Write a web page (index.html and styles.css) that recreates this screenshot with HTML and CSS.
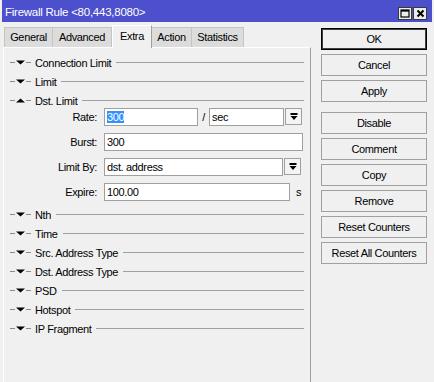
FILE: index.html
```html
<!DOCTYPE html>
<html lang="en">
<head>
  <meta charset="UTF-8">
  <title>Firewall Rule</title>
  <link rel="stylesheet" href="styles.css">
</head>
<body>
  <div class="window">
    <!-- Title bar -->
    <div class="titlebar">
      <span class="title">Firewall Rule &lt;80,443,8080&gt;</span>
      <div class="win-buttons">
        <span class="win-btn">
          <svg width="10" height="9" viewBox="0 0 10 9"><rect x="1" y="1" width="8" height="7" fill="none" stroke="#000" stroke-width="1.2"/><rect x="1" y="1" width="8" height="1.6" fill="#000"/></svg>
        </span>
        <span class="win-btn">
          <svg width="9" height="9" viewBox="0 0 9 9"><path d="M1.5 1.5 L7.5 7.5 M7.5 1.5 L1.5 7.5" stroke="#000" stroke-width="2"/></svg>
        </span>
      </div>
    </div>

    <div class="content">
      <div class="main">
        <!-- Tabs -->
        <div class="tabs">
          <div class="tab tab-general">General</div>
          <div class="tab tab-advanced">Advanced</div>
          <div class="tab tab-extra active">Extra</div>
          <div class="tab tab-action">Action</div>
          <div class="tab tab-statistics">Statistics</div>
        </div>

        <div class="panel">
          <div class="section">
            <svg class="toggle" width="21" height="9" viewBox="0 0 21 9"><path d="M0 4.5 H5 M16 4.5 H21" stroke="#8a8a8a"/><polygon points="6,2.5 15,2.5 10.5,6.5" fill="#000"/></svg>
            <span class="section-title">Connection Limit</span><span class="section-line"></span>
          </div>
          <div class="section">
            <svg class="toggle" width="21" height="9" viewBox="0 0 21 9"><path d="M0 4.5 H5 M16 4.5 H21" stroke="#8a8a8a"/><polygon points="6,2.5 15,2.5 10.5,6.5" fill="#000"/></svg>
            <span class="section-title">Limit</span><span class="section-line"></span>
          </div>
          <div class="section">
            <svg class="toggle" width="21" height="9" viewBox="0 0 21 9"><path d="M0 4.5 H5 M16 4.5 H21" stroke="#8a8a8a"/><polygon points="6,6.5 15,6.5 10.5,2.5" fill="#000"/></svg>
            <span class="section-title">Dst. Limit</span><span class="section-line"></span>
          </div>

          <!-- Dst. Limit fields -->
          <div class="fields">
            <div class="field">
              <span class="label">Rate:</span>
              <span class="input rate-input"><span class="selected">300</span></span>
              <span class="slash">/</span>
              <span class="input rate-unit">sec</span>
              <span class="drop-btn"><svg width="8" height="8" viewBox="0 0 8 8"><rect x="0.5" y="0" width="7" height="2" fill="#000"/><polygon points="0.5,3 7.5,3 4,7" fill="#000"/></svg></span>
            </div>
            <div class="field">
              <span class="label">Burst:</span>
              <span class="input burst-input">300</span>
            </div>
            <div class="field">
              <span class="label">Limit By:</span>
              <span class="input limit-input">dst. address</span>
              <span class="drop-btn"><svg width="8" height="8" viewBox="0 0 8 8"><rect x="0.5" y="0" width="7" height="2" fill="#000"/><polygon points="0.5,3 7.5,3 4,7" fill="#000"/></svg></span>
            </div>
            <div class="field">
              <span class="label">Expire:</span>
              <span class="input expire-input">100.00</span>
              <span class="unit">s</span>
            </div>
          </div>

          <div class="section">
            <svg class="toggle" width="21" height="9" viewBox="0 0 21 9"><path d="M0 4.5 H5 M16 4.5 H21" stroke="#8a8a8a"/><polygon points="6,2.5 15,2.5 10.5,6.5" fill="#000"/></svg>
            <span class="section-title">Nth</span><span class="section-line"></span>
          </div>
          <div class="section">
            <svg class="toggle" width="21" height="9" viewBox="0 0 21 9"><path d="M0 4.5 H5 M16 4.5 H21" stroke="#8a8a8a"/><polygon points="6,2.5 15,2.5 10.5,6.5" fill="#000"/></svg>
            <span class="section-title">Time</span><span class="section-line"></span>
          </div>
          <div class="section">
            <svg class="toggle" width="21" height="9" viewBox="0 0 21 9"><path d="M0 4.5 H5 M16 4.5 H21" stroke="#8a8a8a"/><polygon points="6,2.5 15,2.5 10.5,6.5" fill="#000"/></svg>
            <span class="section-title">Src. Address Type</span><span class="section-line"></span>
          </div>
          <div class="section">
            <svg class="toggle" width="21" height="9" viewBox="0 0 21 9"><path d="M0 4.5 H5 M16 4.5 H21" stroke="#8a8a8a"/><polygon points="6,2.5 15,2.5 10.5,6.5" fill="#000"/></svg>
            <span class="section-title">Dst. Address Type</span><span class="section-line"></span>
          </div>
          <div class="section">
            <svg class="toggle" width="21" height="9" viewBox="0 0 21 9"><path d="M0 4.5 H5 M16 4.5 H21" stroke="#8a8a8a"/><polygon points="6,2.5 15,2.5 10.5,6.5" fill="#000"/></svg>
            <span class="section-title">PSD</span><span class="section-line"></span>
          </div>
          <div class="section">
            <svg class="toggle" width="21" height="9" viewBox="0 0 21 9"><path d="M0 4.5 H5 M16 4.5 H21" stroke="#8a8a8a"/><polygon points="6,2.5 15,2.5 10.5,6.5" fill="#000"/></svg>
            <span class="section-title">Hotspot</span><span class="section-line"></span>
          </div>
          <div class="section">
            <svg class="toggle" width="21" height="9" viewBox="0 0 21 9"><path d="M0 4.5 H5 M16 4.5 H21" stroke="#8a8a8a"/><polygon points="6,2.5 15,2.5 10.5,6.5" fill="#000"/></svg>
            <span class="section-title">IP Fragment</span><span class="section-line"></span>
          </div>
        </div>
      </div>

      <!-- Side buttons -->
      <div class="side">
        <div class="btn btn-default">OK</div>
        <div class="btn">Cancel</div>
        <div class="btn btn-group-end">Apply</div>
        <div class="btn">Disable</div>
        <div class="btn">Comment</div>
        <div class="btn">Copy</div>
        <div class="btn">Remove</div>
        <div class="btn">Reset Counters</div>
        <div class="btn">Reset All Counters</div>
      </div>
    </div>
  </div>
</body>
</html>
```

FILE: styles.css
```css
/* General */
body {
  margin: 0;
  font-family: 'Liberation Sans', Arial, sans-serif;
  font-size: 11px;
  letter-spacing: -0.35px;
  color: #000;
  background-color: #f0f0f0;
}

.window {
  width: 434px;
  height: 382px;
  overflow: hidden;
  background-color: #f0f0f0;
}

/* Title bar */
.titlebar {
  height: 22px;
  margin: 0 2px;
  background-color: #4c50cc;
  display: flex;
  align-items: center;
  justify-content: space-between;
  padding: 0 5px 0 3px;
}

.title {
  color: #fff;
  font-size: 11.5px;
  letter-spacing: -0.25px;
  margin-top: 1px;
}

.win-buttons {
  display: flex;
  gap: 1px;
  margin-top: 5px;
}

.win-btn {
  width: 12px;
  height: 11px;
  border: 1px solid #3a3a3a;
  background-color: #ececec;
  display: flex;
  align-items: center;
  justify-content: center;
}

/* Main area */
.content {
  display: flex;
}

.main {
  width: 308px;
  margin-left: 3px;
}

.tabs {
  display: flex;
  align-items: flex-end;
  height: 22px;
  margin-top: 3px;
  padding-left: 1px;
}

.tab {
  height: 19px;
  line-height: 19px;
  text-align: center;
  background-color: #dcdcdc;
  border: 1px solid #c4c4c4;
  border-bottom: none;
  box-sizing: content-box;
}

.tab-general { width: 47px; }
.tab-advanced { width: 58px; border-left: none; }
.tab-extra { width: 38px; }
.tab-action { width: 39px; border-left: none; }
.tab-statistics { width: 51px; border-left: none; }

.tab.active {
  height: 22px;
  line-height: 20px;
  background-color: #f0f0f0;
  border-color: #fff #a0a0a0 #f0f0f0 #fff;
  position: relative;
  z-index: 1;
  margin-bottom: -1px;
}

.panel {
  height: 340px;
  border-top: 1px solid #fff;
  border-left: 1px solid #fff;
  border-right: 1px solid #a0a0a0;
  padding: 5px 6px 0 6px;
}

/* Collapsible sections */
.section {
  display: flex;
  align-items: center;
  height: 19px;
}

.toggle {
  flex-shrink: 0;
  margin-right: 4px;
}

.section-title {
  white-space: nowrap;
}

.section-line {
  flex: 1;
  height: 1px;
  margin-left: 5px;
  background-color: #a0a0a0;
}

/* Fields */
.fields {
  margin: -2px 0 4px -6px;
}

.field {
  display: flex;
  align-items: flex-start;
  height: 18px;
  margin-bottom: 7px;
}

.field:last-child {
  margin-bottom: 0;
}

.label {
  width: 93px;
  margin-right: 7px;
  text-align: right;
  line-height: 18px;
}

.input {
  height: 16px;
  line-height: 16px;
  border: 1px solid #a0a0a0;
  background-color: #fff;
  padding-left: 2px;
  box-sizing: content-box;
  white-space: nowrap;
}

.rate-input { width: 90px; }
.rate-unit { width: 71px; }
.burst-input { width: 195px; }
.limit-input { width: 175px; }
.expire-input { width: 182px; }

.selected {
  display: inline-block;
  line-height: 12px;
  background-color: #3390ff;
  color: #fff;
}

.slash {
  width: 11px;
  text-align: center;
  line-height: 18px;
}

.drop-btn {
  width: 15px;
  height: 15px;
  margin-left: 1px;
  border: 1px solid #a0a0a0;
  background-color: #f4f4f4;
  display: flex;
  align-items: center;
  justify-content: center;
}

.unit {
  margin-left: 6px;
  line-height: 18px;
}

/* Side buttons */
.side {
  width: 106px;
  margin-left: 10px;
  padding-top: 6px;
}

.btn {
  height: 20px;
  line-height: 20px;
  text-align: center;
  border: 1px solid #a0a0a0;
  background-color: #f0f0f0;
  margin-bottom: 4px;
}

.btn-default {
  border-color: #000;
  box-shadow: inset 0 0 0 1px #404040;
}

.btn-group-end {
  margin-bottom: 10px;
}
```
